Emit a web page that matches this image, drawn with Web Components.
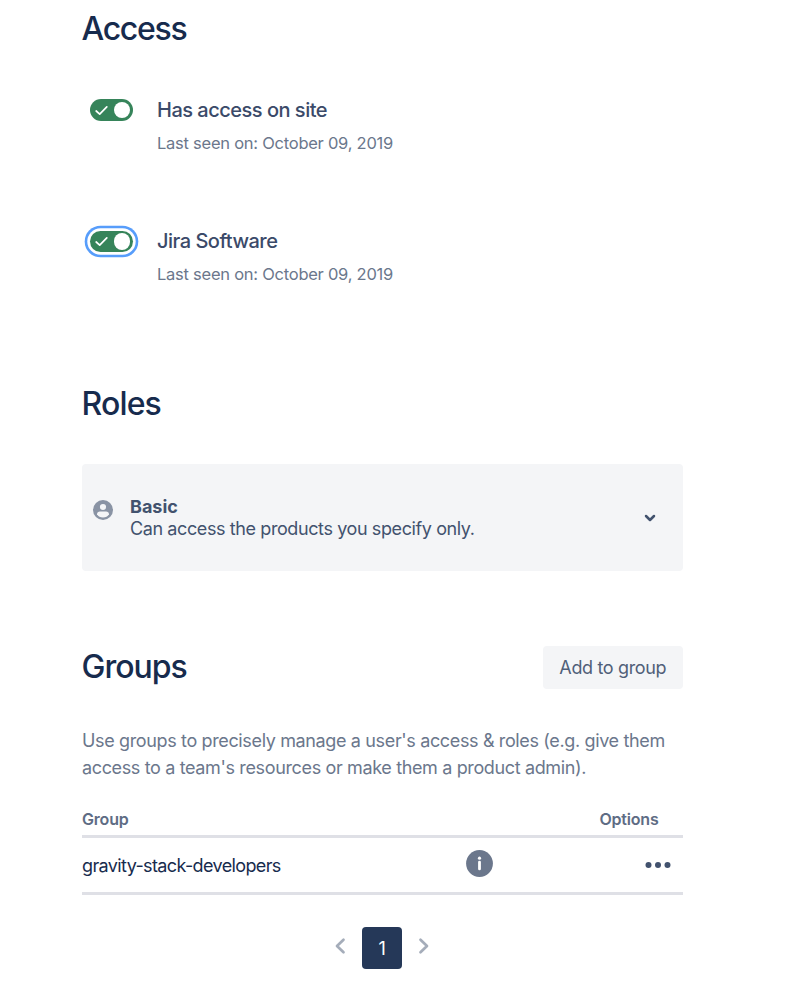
<!DOCTYPE html>
<html lang="en">
<head>
<meta charset="UTF-8">
<title>User access</title>
<style>
  body {
    margin: 0;
    background: #fff;
    color: #42526e;
    font-family: Inter, "Liberation Sans", sans-serif;
  }
  .access { --heading-spacing: -1.3px; }
  .roles { --heading-spacing: -0.85px; }
  .groups { --heading-spacing: -1px; --heading-top: 1.5px; }
</style>
</head>
<body>
<user-page>
  <page-section class="access" label="Access">
    <access-item name="Has access on site" seen="October 09, 2019"></access-item>
    <access-item name="Jira Software" seen="October 09, 2019" focused></access-item>
  </page-section>
  <page-section class="roles" label="Roles">
    <role-select name="Basic">Can access the products you specify only.</role-select>
  </page-section>
  <page-section class="groups" label="Groups">
    <plain-button slot="action">Add to group</plain-button>
    <group-intro>Use groups to precisely manage a user's access &amp; roles (e.g. give them access to a team's resources or make them a product admin).</group-intro>
    <group-table>gravity-stack-developers</group-table>
    <page-nav>1</page-nav>
  </page-section>
</user-page>

<script>
// Attaches an open shadow root with the given markup
function shadow(el, html) {
  el.attachShadow({ mode: 'open' }).innerHTML = html;
}

class UserPage extends HTMLElement {
  constructor() {
    super();
    shadow(this, `
      <style>
        :host { display: block; box-sizing: border-box; width: 682.5px; padding: 9.5px 0 0 82px; }
        ::slotted(.roles) { margin-top: 76.5px; }
        ::slotted(.groups) { margin-top: 75px; }
      </style>
      <slot></slot>
    `);
  }
}

class PageSection extends HTMLElement {
  connectedCallback() {
    if (this.shadowRoot) return;
    shadow(this, `
      <style>
        :host { display: block; }
        header { display: flex; justify-content: space-between; align-items: flex-start; }
        h2 {
          margin: var(--heading-top, 0) 0 0 -0.5px;
          font-size: 32px;
          line-height: 37px;
          font-weight: 500;
          letter-spacing: var(--heading-spacing, -1px);
          color: #172b4d;
        }
      </style>
      <header><h2>${this.getAttribute('label')}</h2><slot name="action"></slot></header>
      <slot></slot>
    `);
  }
}

class ToggleSwitch extends HTMLElement {
  constructor() {
    super();
    shadow(this, `
      <style>
        :host {
          display: flex;
          align-items: center;
          justify-content: space-between;
          box-sizing: border-box;
          width: 43px;
          height: 21.5px;
          padding: 0 2.5px 0 5.5px;
          border-radius: 11px;
          background: #36845a;
        }
        :host([focused]) { box-shadow: 0 0 0 2.7px #fff, 0 0 0 5.3px #579dfb; }
        i { width: 16.5px; height: 16.5px; border-radius: 50%; background: #fff; }
      </style>
      <svg width="13" height="12" viewBox="0 0 13 12" fill="none" stroke="#fff" stroke-width="1.7" stroke-linecap="round" stroke-linejoin="round"><path d="M1.2 7 4.7 10.2 11.8 2.8"/></svg>
      <i></i>
    `);
  }
}

class AccessItem extends HTMLElement {
  connectedCallback() {
    if (this.shadowRoot) return;
    const focused = this.hasAttribute('focused') ? 'focused' : '';
    shadow(this, `
      <style>
        :host { display: flex; gap: 24.5px; height: 80px; padding: 51.2px 0 0 7.5px; }
        toggle-switch { margin-top: 1.8px; }
        h3 { margin: 0; font-size: 20px; line-height: 24px; font-weight: 500; letter-spacing: -0.5px; color: #3b4a69; }
        p { margin: 11px 0 0; font-size: 16.5px; line-height: 20px; letter-spacing: -0.25px; color: #6b778c; }
      </style>
      <toggle-switch ${focused}></toggle-switch>
      <div>
        <h3>${this.getAttribute('name')}</h3>
        <p>Last seen on: ${this.getAttribute('seen')}</p>
      </div>
    `);
  }
}

class RoleSelect extends HTMLElement {
  connectedCallback() {
    if (this.shadowRoot) return;
    shadow(this, `
      <style>
        :host {
          display: flex;
          box-sizing: border-box;
          height: 107px;
          margin-top: 42px;
          padding: 32px 24.5px 0 11px;
          border-radius: 4px;
          background: #f4f5f7;
        }
        .avatar { margin-top: 3.5px; }
        .text { flex: 1; margin-left: 17px; font-size: 18px; line-height: 21.6px; color: #42526e; }
        .text div { letter-spacing: -0.4px; }
        b { display: block; font-weight: 650; letter-spacing: 0; }
        .chevron { margin-top: 15px; }
      </style>
      <svg class="avatar" width="20" height="20" viewBox="0 0 20 20"><circle cx="10" cy="10" r="10" fill="#8993a4"/><circle cx="10" cy="7" r="3.1" fill="#f4f5f7"/><path d="M4 14.3c0-1.8 1.3-2.8 3-2.8h6c1.7 0 3 1 3 2.8-1.3 2.2-3.3 3.3-6 3.3s-4.7-1.1-6-3.3z" fill="#f4f5f7"/></svg>
      <div class="text"><b>${this.getAttribute('name')}</b><div><slot></slot></div></div>
      <svg class="chevron" width="16" height="14" viewBox="0 0 16 14" fill="none" stroke="#42526e" stroke-width="2.5" stroke-linecap="round" stroke-linejoin="round"><path d="M4 5 8 9 12 5"/></svg>
    `);
  }
}

class PlainButton extends HTMLElement {
  constructor() {
    super();
    shadow(this, `
      <style>
        button {
          display: block;
          width: 139.5px;
          height: 42.5px;
          margin: 0 0 -5.5px;
          padding: 1px 0 0;
          border: 0;
          border-radius: 4px;
          background: #f4f5f7;
          color: #505f79;
          font: 400 18px/42px Inter, "Liberation Sans", sans-serif;
          letter-spacing: -0.35px;
        }
      </style>
      <button><slot></slot></button>
    `);
  }
}

class GroupIntro extends HTMLElement {
  constructor() {
    super();
    shadow(this, `
      <style>
        :host { display: block; margin-top: 42px; font-size: 18px; line-height: 27px; letter-spacing: -0.36px; color: #6b778c; }
      </style>
      <slot></slot>
    `);
  }
}

class GroupTable extends HTMLElement {
  constructor() {
    super();
    shadow(this, `
      <style>
        :host { display: block; margin-top: 28px; }
        .row { display: flex; align-items: center; border-bottom: 3px solid #dfe0e6; }
        .head { justify-content: space-between; height: 26.5px; padding-right: 24px; align-items: flex-start; font-size: 16px; line-height: 20px; font-weight: 600; color: #5e6c84; letter-spacing: -0.2px; }
        .body { height: 53.5px; font-size: 18px; color: #172b4d; letter-spacing: -0.62px; }
        .name { width: 384px; }
        .info { margin-bottom: 3px; }
        .more { margin-left: auto; margin-right: 11.5px; }
      </style>
      <div class="row head"><span>Group</span><span>Options</span></div>
      <div class="row body">
        <span class="name"><slot></slot></span>
        <svg class="info" width="27" height="27" viewBox="0 0 27 27"><circle cx="13.5" cy="13.5" r="13.4" fill="#6b778c"/><circle cx="13.5" cy="8.2" r="1.6" fill="#fff"/><rect x="12.1" y="10.8" width="2.8" height="9.5" rx="1.3" fill="#fff"/></svg>
        <svg class="more" width="26" height="6" viewBox="0 0 26 6" fill="#42526e"><circle cx="3.5" cy="3" r="3"/><circle cx="13" cy="3" r="3"/><circle cx="22.5" cy="3" r="3"/></svg>
      </div>
    `);
  }
}

class PageNav extends HTMLElement {
  constructor() {
    super();
    shadow(this, `
      <style>
        :host { display: flex; justify-content: center; align-items: center; gap: 16px; margin-top: 32px; }
        span { width: 40px; height: 42.5px; border-radius: 4px; background: #253858; color: #fff; font-size: 18px; line-height: 43px; text-align: center; }
        svg { fill: none; stroke: #a5adba; stroke-width: 2.7; stroke-linecap: round; stroke-linejoin: round; margin-bottom: 4px; }
      </style>
      <svg width="12" height="18" viewBox="0 0 12 18"><path d="M9.5 2.7 3 9 9.5 15.3"/></svg>
      <span><slot></slot></span>
      <svg width="12" height="18" viewBox="0 0 12 18"><path d="M2.5 2.7 9 9 2.5 15.3"/></svg>
    `);
  }
}

customElements.define('user-page', UserPage);
customElements.define('page-section', PageSection);
customElements.define('toggle-switch', ToggleSwitch);
customElements.define('access-item', AccessItem);
customElements.define('role-select', RoleSelect);
customElements.define('plain-button', PlainButton);
customElements.define('group-intro', GroupIntro);
customElements.define('group-table', GroupTable);
customElements.define('page-nav', PageNav);
</script>
</body>
</html>
